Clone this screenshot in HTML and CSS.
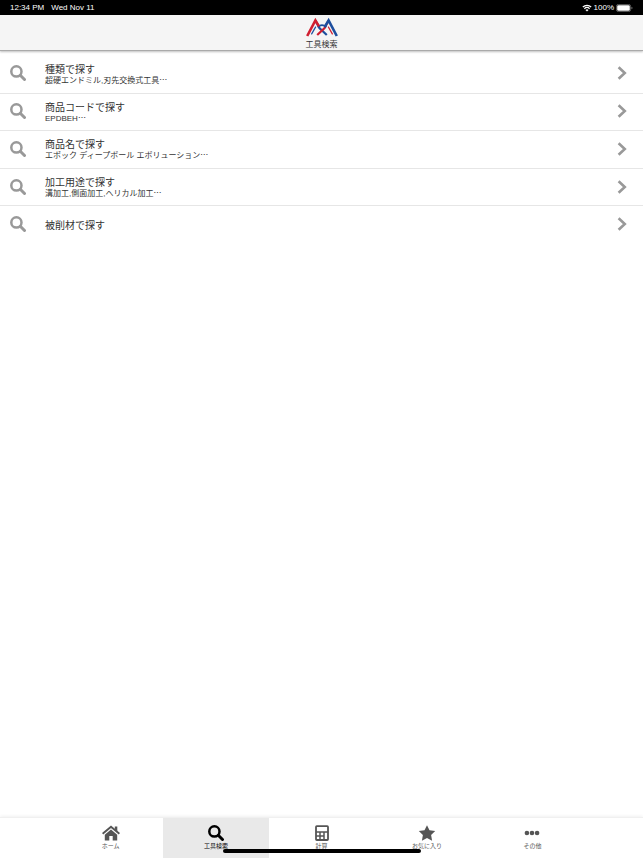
FILE: index.html
```html
<!doctype html>
<html lang="ja">
<head>
	<meta charset="UTF-8">
	<meta name="viewport" content="width=device-width, initial-scale=1">
	<title>工具検索</title>
	<link rel="stylesheet" href="styles.css">
</head>
<body>
	<!-- 共通アイコン -->
	<svg class="defs" width="0" height="0">
		<symbol id="search" viewBox="0 0 16 16">
			<circle cx="6.4" cy="6.4" r="5.1" fill="none" stroke="currentColor" stroke-width="2.5"/>
			<path d="M10.3 10.3l4.2 4.2" fill="none" stroke="currentColor" stroke-width="3" stroke-linecap="round"/>
		</symbol>
		<symbol id="arrow" viewBox="0 0 10 14">
			<path d="M1.6 1.2L7.8 7l-6.2 5.8" fill="none" stroke="currentColor" stroke-width="2.6"/>
		</symbol>
	</svg>

	<div class="status">
		<span>12:34 PM</span>
		<span>Wed Nov 11</span>
		<div class="status-right">
			<svg class="wifi" viewBox="0 0 18 14">
				<path d="M1.5 5.2a10.8 10.8 0 0 1 15 0M4.3 8.2a6.8 6.8 0 0 1 9.4 0" fill="none" stroke="#fff" stroke-width="2.3"/>
				<path d="M9 13.2L6.2 10.4a4 4 0 0 1 5.6 0z" fill="#fff"/>
			</svg>
			<span>100%</span>
			<svg class="battery" viewBox="0 0 17 8">
				<rect x=".4" y=".4" width="14.2" height="7.2" rx="2" fill="none" stroke="#999" stroke-width=".6"/>
				<rect x="1.2" y="1.2" width="12.6" height="5.6" rx="1.3" fill="#fff"/>
				<path d="M15.6 2.8v2.4c1-.4 1-2 0-2.4z" fill="#aaa"/>
			</svg>
		</div>
	</div>

	<header class="header">
		<svg class="logo" viewBox="0 0 32 20">
			<g fill="none" stroke-linejoin="miter">
				<path d="M9.4 3.4l4 7.6 7.4 7" stroke="#1e4f9e" stroke-width="2.2"/>
				<path d="M22.6 3.4l-4 7.6-7.4 7" stroke="#d01f30" stroke-width="2.2"/>
				<path d="M11.8 10.4q4.2-4.4 8.4 0" stroke="#1e4f9e" stroke-width="1.8"/>
				<path d="M1.2 19L9.4 3.4l3.6 6" stroke="#d01f30" stroke-width="2.6"/>
				<path d="M5.4 17.4L9.8 9.6" stroke="#1e4f9e" stroke-width="1.2"/>
				<path d="M26.6 17.4l-4.4-7.8" stroke="#d01f30" stroke-width="1.2"/>
				<path d="M19 9.4l3.6-6L30.8 19" stroke="#1e4f9e" stroke-width="2.6"/>
			</g>
		</svg>
		<h1 class="title">工具検索</h1>
	</header>

	<main class="main">
		<nav class="list">
			<a class="row" href="#">
				<svg class="row-icon"><use href="#search"/></svg>
				<div class="row-text">
					<p class="name">種類で探す</p>
					<p class="note">超硬エンドミル,刃先交換式工具⋯</p>
				</div>
				<svg class="row-arrow"><use href="#arrow"/></svg>
			</a>
			<a class="row" href="#">
				<svg class="row-icon"><use href="#search"/></svg>
				<div class="row-text">
					<p class="name">商品コードで探す</p>
					<p class="note">EPDBEH⋯</p>
				</div>
				<svg class="row-arrow"><use href="#arrow"/></svg>
			</a>
			<a class="row" href="#">
				<svg class="row-icon"><use href="#search"/></svg>
				<div class="row-text">
					<p class="name">商品名で探す</p>
					<p class="note">エポック ディープボール エボリューション⋯</p>
				</div>
				<svg class="row-arrow"><use href="#arrow"/></svg>
			</a>
			<a class="row" href="#">
				<svg class="row-icon"><use href="#search"/></svg>
				<div class="row-text">
					<p class="name">加工用途で探す</p>
					<p class="note">溝加工,側面加工,ヘリカル加工⋯</p>
				</div>
				<svg class="row-arrow"><use href="#arrow"/></svg>
			</a>
			<a class="row" href="#">
				<svg class="row-icon"><use href="#search"/></svg>
				<div class="row-text">
					<p class="name">被削材で探す</p>
				</div>
				<svg class="row-arrow"><use href="#arrow"/></svg>
			</a>
		</nav>
	</main>

	<footer class="footer">
		<nav class="tabs">
			<a class="tab" href="#">
				<svg class="tab-icon" viewBox="0 0 18 16">
					<path d="M.6 8.8L9 1.8l8.4 7" fill="none" stroke="currentColor" stroke-width="2"/>
					<path d="M12.8 1.5h2.5v5l-2.5-2z" fill="currentColor"/>
					<path d="M9 4.6l6.2 5.2v5.6h-4.5v-4.3H7.3v4.3H2.8V9.8z" fill="currentColor"/>
				</svg>
				<span>ホーム</span>
			</a>
			<a class="tab active" href="#">
				<svg class="tab-icon"><use href="#search"/></svg>
				<span>工具検索</span>
			</a>
			<a class="tab" href="#">
				<svg class="tab-icon" viewBox="0 0 18 16">
					<rect x="3" y="1.2" width="12" height="13.8" rx=".8" fill="none" stroke="currentColor" stroke-width="1.8"/>
					<path d="M3 7h12M3 11h8M7 7v8M11 7v8" fill="none" stroke="currentColor" stroke-width="1.5"/>
				</svg>
				<span>計算</span>
			</a>
			<a class="tab" href="#">
				<svg class="tab-icon" viewBox="0 0 18 16">
					<path d="M9 .2l2.5 5.1 5.7.8-4.1 4 1 5.7L9 13.1l-5.1 2.7 1-5.7-4.1-4 5.7-.8z" fill="currentColor"/>
				</svg>
				<span>お気に入り</span>
			</a>
			<a class="tab" href="#">
				<svg class="tab-icon" viewBox="0 0 18 16">
					<g fill="currentColor">
						<circle cx="3.9" cy="8" r="2.3"/>
						<circle cx="9" cy="8" r="2.3"/>
						<circle cx="14.1" cy="8" r="2.3"/>
					</g>
				</svg>
				<span>その他</span>
			</a>
		</nav>
		<div class="home-bar"></div>
	</footer>
</body>
</html>
```

FILE: styles.css
```css
* {
	box-sizing: border-box;
	margin: 0;
	padding: 0;
}
body {
	display: flex;
	flex-direction: column;
	min-height: 100vh;
	background-color: #fff;
	color: #333;
	font-family: "Liberation Sans", "Noto Sans CJK JP", sans-serif;
}
a {
	color: inherit;
	text-decoration: none;
}
.defs {
	position: absolute;
}

/* ステータスバー */
.status {
	display: flex;
	align-items: center;
	gap: 7px;
	height: 15px;
	padding: 0 10px;
	background-color: #000;
	color: #fff;
	font-size: 8px;
	line-height: 15px;
}
.status-right {
	display: flex;
	align-items: center;
	gap: 2px;
	margin-left: auto;
}
.wifi {
	width: 10px;
	height: 8px;
}
.battery {
	width: 17px;
	height: 8px;
}

/* ヘッダー */
.header {
	display: flex;
	flex-direction: column;
	align-items: center;
	padding-top: 2px;
	background-color: #f5f5f5;
	border-bottom: 1px solid #aaa;
	box-shadow: 0 1px 2px rgba(0,0,0,.25);
}
.logo {
	width: 32px;
	height: 20px;
}
.title {
	margin-top: 3px;
	font-size: 8px;
	line-height: 10px;
	font-weight: 400;
}

/* 検索メニュー */
.main {
	flex: 1;
	padding-top: 4px;
}
.list {
	display: grid;
	grid-auto-rows: 1fr;
	min-height: 188px;
}
.row {
	display: flex;
	align-items: center;
	padding: 0 16px 1px 10px;
}
.row + .row {
	border-top: 1px solid #e6e6e6;
}
.row-icon {
	width: 16px;
	height: 16px;
	margin-right: 19px;
	color: #999;
}
.row-text {
	flex: 1;
	padding-top: 3px;
}
.name {
	font-size: 10px;
	line-height: 12px;
}
.note {
	font-size: 8px;
	line-height: 10px;
}
.row-arrow {
	width: 10px;
	height: 14px;
	color: #999;
}

/* タブバー */
.footer {
	position: relative;
	border-top: 1px solid #f0f0f0;
	box-shadow: 0 -1px 3px rgba(0,0,0,.06);
}
.tabs {
	display: flex;
	width: 82%;
	margin: 0 auto;
}
.tab {
	display: flex;
	flex: 1;
	flex-direction: column;
	align-items: center;
	gap: 1px;
	height: 40px;
	padding-top: 7px;
	color: #555;
	font-size: 6px;
	line-height: 8px;
}
.tab.active {
	background-color: #e9e9e9;
	color: #000;
}
.tab-icon {
	width: 18px;
	height: 16px;
}
.home-bar {
	position: absolute;
	left: 50%;
	bottom: 5px;
	width: 198px;
	height: 4px;
	border-radius: 2px;
	background-color: #000;
	transform: translateX(-50%);
}
```
